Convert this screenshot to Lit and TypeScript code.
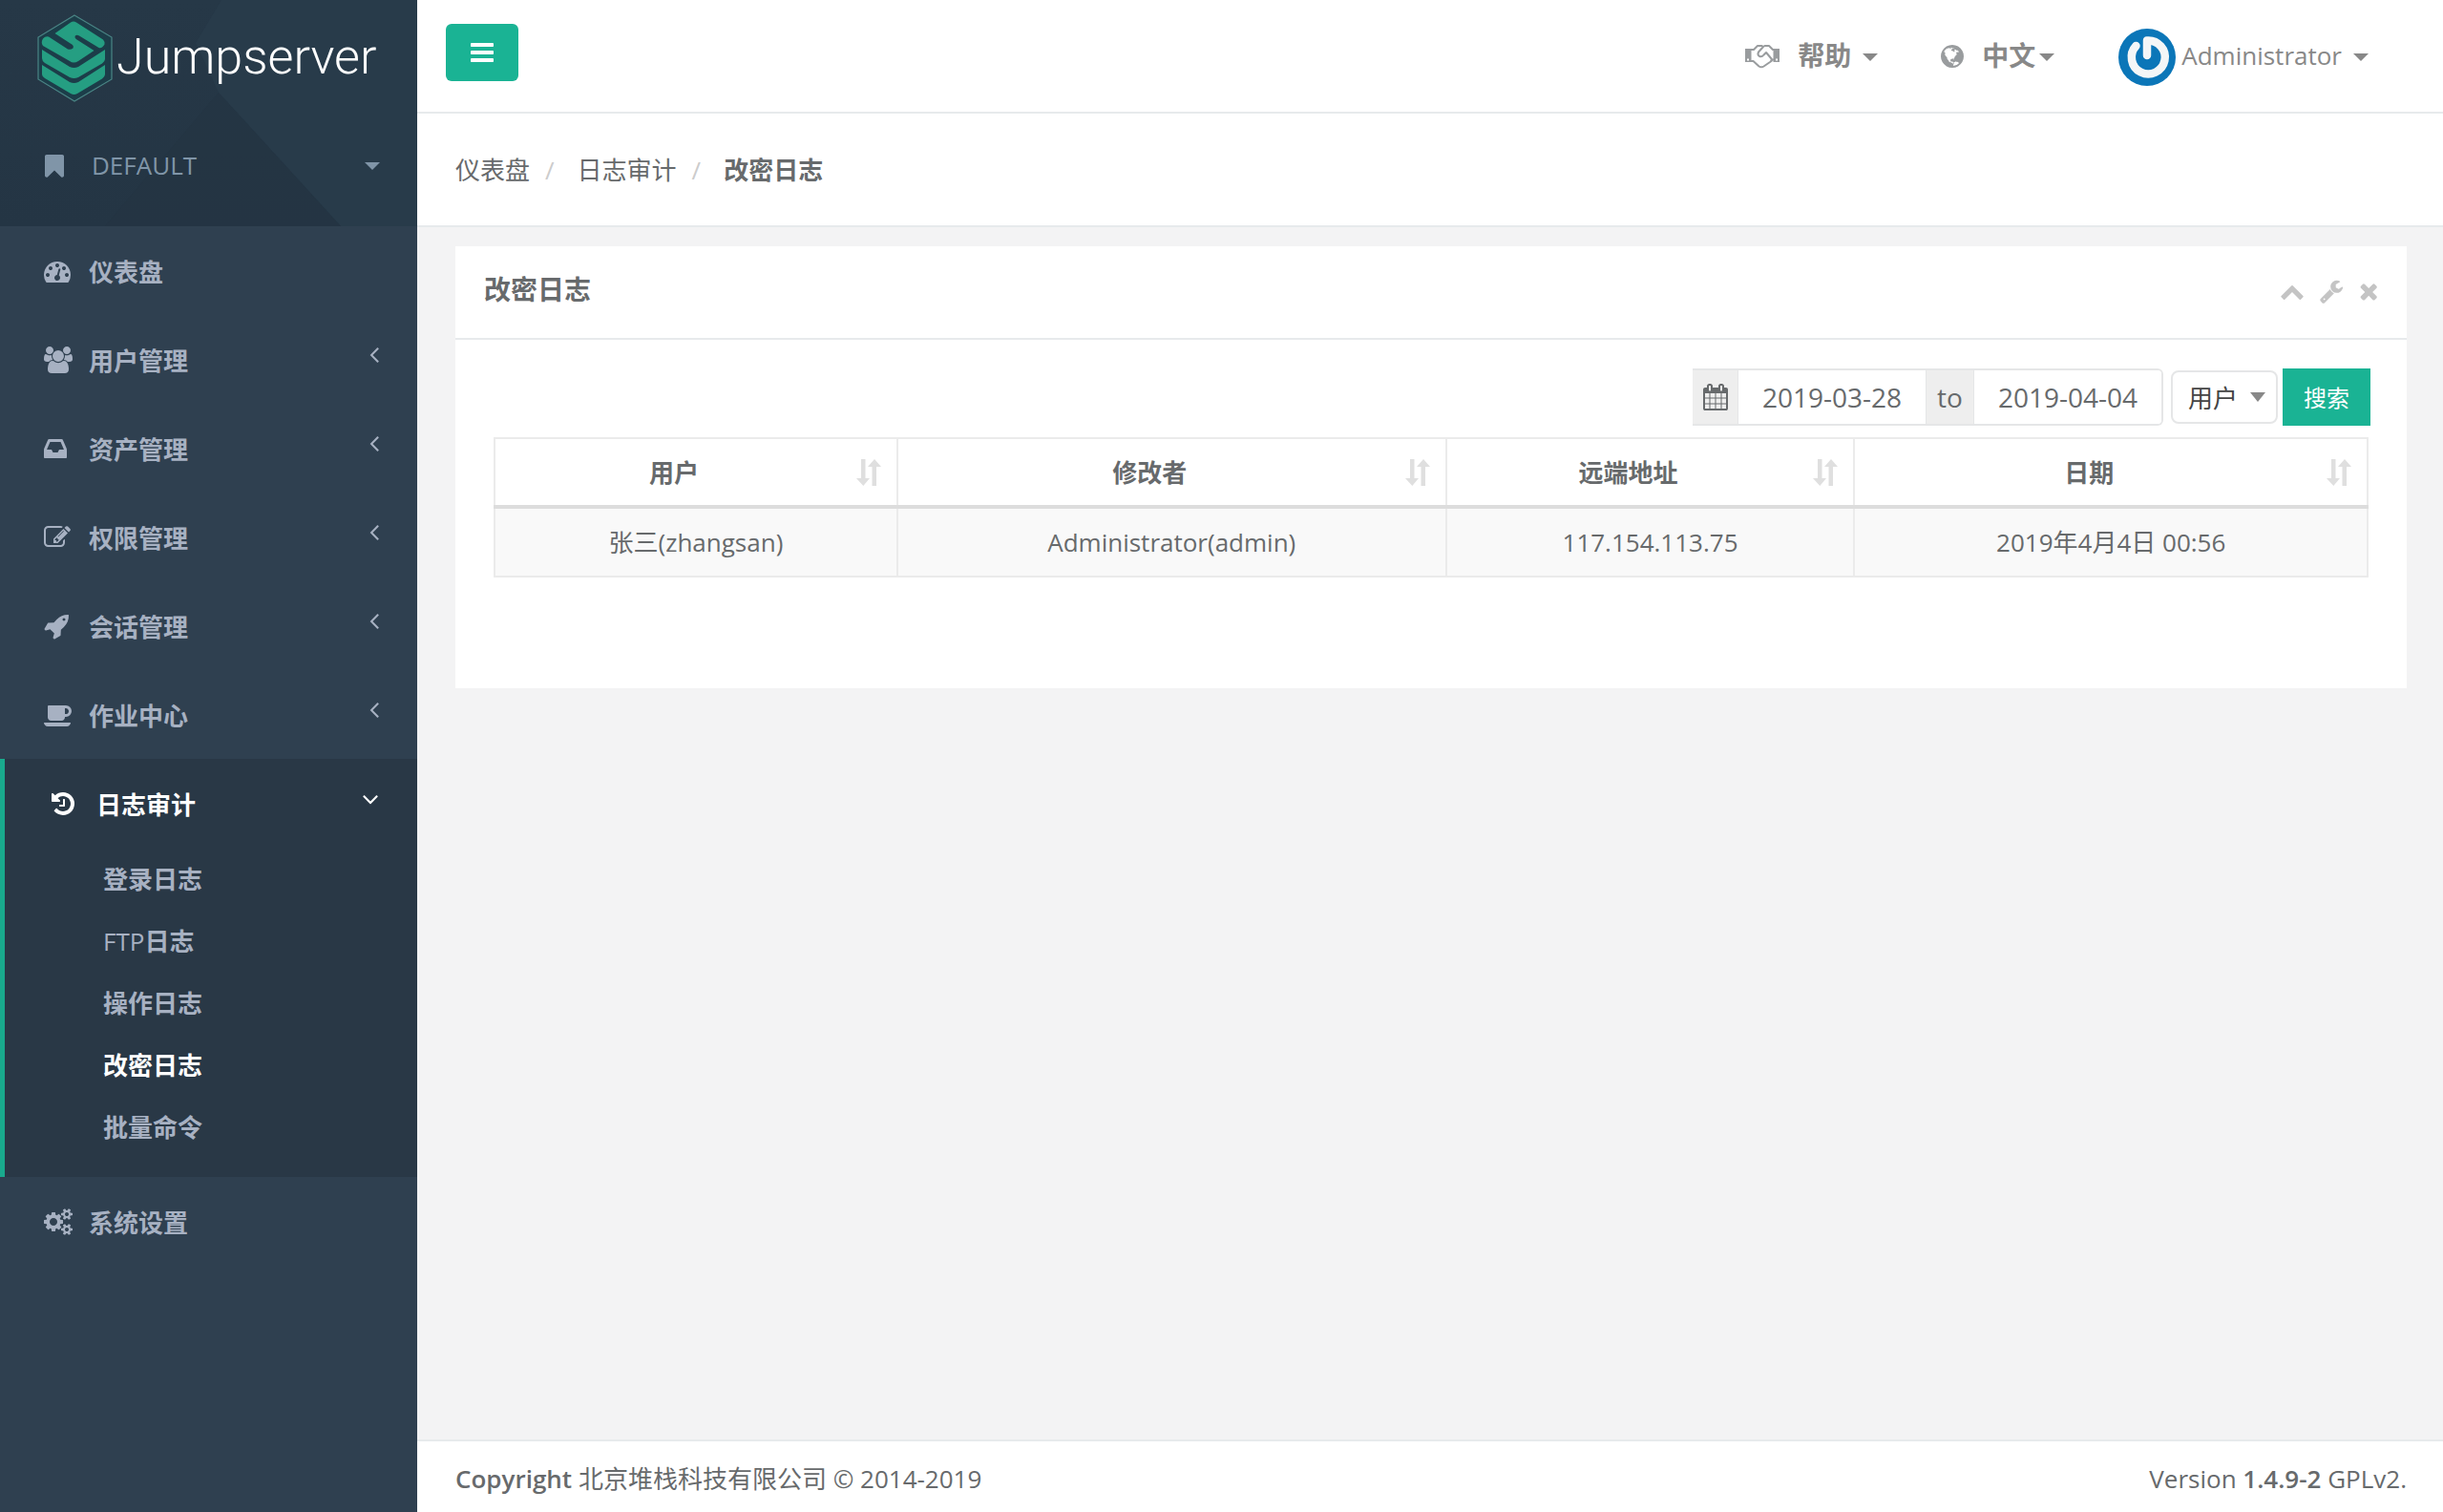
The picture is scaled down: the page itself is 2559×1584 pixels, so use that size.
import { LitElement, html, css, svg } from "lit";
import { customElement } from "lit/decorators.js";

type Glyph = { w: number; d: string };

const icons: Record<string, Glyph> = {
  bars: { w: 1536, d: "M1536 1344v128q0 26-19 45t-45 19H64q-26 0-45-19t-19-45v-128q0-26 19-45t45-19h1408q26 0 45 19t19 45zm0-512v128q0 26-19 45t-45 19H64q-26 0-45-19T0 960V832q0-26 19-45t45-19h1408q26 0 45 19t19 45zm0-512v128q0 26-19 45t-45 19H64q-26 0-45-19T0 448V320q0-26 19-45t45-19h1408q26 0 45 19t19 45z" },
  bookmark: { w: 1280, d: "M1164 128q23 0 44 9 33 13 52.500 41t19.500 62v1289q0 34-19.500 62t-52.500 41q-19 8-44 8-48 0-83-32L640 1184l-441 424q-36 33-83 33-23 0-44-9-33-13-52.500-41T0 1529V240q0-34 19.500-62T72 137q21-9 44-9h1048z" },
  dashboard: { w: 1792, d: "M384 1152q0-53-37.500-90.500T256 1024t-90.500 37.500T128 1152t37.500 90.500T256 1280t90.500-37.500T384 1152zm192-448q0-53-37.500-90.500T448 576t-90.500 37.500T320 704t37.500 90.500T448 832t90.500-37.500T576 704zm428 481l101-382q6-26-7.500-48.500T1059 725t-48 6.500-30 39.500l-101 382q-60 5-107 43.500t-63 98.500q-20 77 20 146t117 89 146-20 89-117q16-60-6-117t-72-91zm660-33q0-53-37.500-90.500T1536 1024t-90.500 37.500-37.500 90.500 37.500 90.500 90.500 37.500 90.500-37.500 37.500-90.500zm-640-640q0-53-37.500-90.500T896 384t-90.500 37.500T768 512t37.500 90.500T896 640t90.500-37.500T1024 512zm448 192q0-53-37.500-90.500T1344 576t-90.500 37.500T1216 704t37.500 90.500T1344 832t90.500-37.500T1472 704zm320 448q0 261-141 483-19 29-54 29H195q-35 0-54-29Q0 1414 0 1152q0-182 71-348t191-286 286-191 348-71 348 71 286 191 191 286 71 348z" },
  users: { w: 1920, d: "M593 896q-162 5-265 128H194q-82 0-138-40.500T0 865q0-353 124-353 6 0 43.500 21t97.500 42.500T384 597q67 0 133-23-5 37-5 66 0 139 81 256zm1071 637q0 120-73 189.500t-194 69.500H523q-121 0-194-69.500T256 1533q0-53 3.500-103.500t14-109T300 1212t43-97.500 62-81 85.500-53.500T602 960q10 0 43 21.500t73 48 107 48 135 21.500 135-21.500 107-48 73-48 43-21.500q61 0 111.500 20t85.500 53.500 62 81 43 97.500 26.500 108.500 14 109 3.500 103.500zM640 256q0 106-75 181t-181 75-181-75-75-181 75-181T384 0t181 75 75 181zm704 384q0 159-112.500 271.500T960 1024 688.500 911.500 576 640t112.500-271.500T960 256t271.500 112.500T1344 640zm576 225q0 78-56 118.500t-138 40.500h-134q-103-123-265-128 81-117 81-256 0-29-5-66 66 23 133 23 59 0 119-21.500t97.500-42.500 43.500-21q124 0 124 353zm-128-609q0 106-75 181t-181 75-181-75-75-181 75-181 181-75 181 75 75 181z" },
  inbox: { w: 1536, d: "M1023 960h316q-1-3-2.500-8t-2.500-8l-212-496H414L202 944q-1 2-2.500 8t-2.500 8h316l95 192h320zm513 30v482q0 26-19 45t-45 19H64q-26 0-45-19t-19-45V990q0-62 25-123l238-552q10-25 36.500-42t52.500-17h832q26 0 52.500 17t36.500 42l238 552q25 61 25 123z" },
  edit: { w: 1792, d: "M888 1184l116-116-152-152-116 116v56h96v96h56zm440-720q-16-16-33 1L945 815q-17 17-1 33t33-1l350-350q17-17 1-33zm80 594v190q0 119-84.500 203.500T1120 1536H288q-119 0-203.500-84.500T0 1248V416q0-119 84.500-203.500T288 128h832q63 0 117 25 15 7 18 23 3 17-9 29l-49 49q-14 14-32 8-23-6-45-6H288q-66 0-113 47t-47 113v832q0 66 47 113t113 47h832q66 0 113-47t47-113v-126q0-13 9-22l64-64q15-15 35-7t20 29zm-96-738l288 288-672 672H640V992zm444 132l-92 92-288-288 92-92q28-28 68-28t68 28l152 152q28 28 28 68t-28 68z" },
  rocket: { w: 1664, d: "M1440 448q0-40-28-68t-68-28-68 28-28 68 28 68 68 28 68-28 28-68zm224-288q0 249-75.500 430.500T1335 955q-81 80-195 176l-20 379q-2 16-16 26l-384 224q-7 4-16 4-12 0-23-9l-64-64q-13-14-8-32l85-276-281-281-276 85q-3 1-9 1-14 0-23-9l-64-64q-17-19-5-39l224-384q10-14 26-16l379-20q96-114 176-195 188-187 358-258t431-71q14 0 24 9.500t10 22.500z" },
  coffee: { w: 1920, d: "M1664 640q0-80-56-136t-136-56h-64v384h64q80 0 136-56t56-136zM0 1408h1792q0 106-75 181t-181 75H256q-106 0-181-75T0 1408zm1856-768q0 159-112.500 271.500T1472 1024h-64v32q0 92-66 158t-158 66H480q-92 0-158-66t-66-158V320q0-26 19-45t45-19h1152q159 0 271.500 112.500T1856 640z" },
  history: { w: 1536, d: "M1536 896q0 156-61 298t-164 245-245 164-298 61q-172 0-327-72.500T177 1387q-7-10-6.500-22.500t8.500-20.500l137-138q10-9 25-9 16 2 23 12 73 95 179 147t225 52q104 0 198.500-40.500T1130 1258t109.500-163.500T1280 896t-40.500-198.500T1130 534 966.500 424.500 768 384q-98 0-188 35.500T420 521l137 138q31 30 14 69-17 40-59 40H64q-26 0-45-19T0 704V256q0-42 40-59 39-17 69 14l130 129q107-101 244.500-156.500T768 128q156 0 298 61t245 164 164 245 61 298zM896 608v448q0 14-9 23t-23 9H544q-14 0-23-9t-9-23v-64q0-14 9-23t23-9h224V608q0-14 9-23t23-9h64q14 0 23 9t9 23z" },
  cogs: { w: 1920, d: "M896 896q0-106-75-181t-181-75-181 75-75 181 75 181 181 75 181-75 75-181zm768 512q0-52-38-90t-90-38-90 38-38 90q0 53 37.500 90.500t90.500 37.500 90.500-37.500 37.500-90.500zm0-1024q0-52-38-90t-90-38-90 38-38 90q0 53 37.500 90.500T1536 512t90.500-37.500T1664 384zm-384 421v185q0 10-7 19.500t-16 10.500l-155 24q-11 35-32 76 34 48 90 115 7 11 7 20 0 12-7 19-23 30-82.500 89.500T999 1423q-11 0-21-7l-115-90q-37 19-77 31-11 108-23 155-7 24-30 24H547q-11 0-20-7.500t-10-17.500l-23-153q-34-10-75-31l-118 89q-7 7-20 7-11 0-21-8-144-133-144-160 0-9 7-19 10-14 41-53t47-61q-23-44-35-82l-152-24q-10-1-17-9.500T0 987V802q0-10 7-19.500T23 772l155-24q11-35 32-76-34-48-90-115-7-11-7-20 0-12 7-20 22-30 82-89t79-59q11 0 21 7l115 90q34-18 77-32 11-108 23-154 7-24 30-24h186q11 0 20 7.500t10 17.500l23 153q34 10 75 31l118-89q8-7 20-7 11 0 21 8 144 133 144 160 0 8-7 19-12 16-42 54t-45 60q23 48 34 82l152 23q10 2 17 10.500t7 19.500zm640 533v140q0 16-149 31-12 27-30 52 51 113 51 138 0 4-4 7-122 71-124 71-8 0-46-47t-52-68q-20 2-30 2t-30-2q-14 21-52 68t-46 47q-2 0-124-71-4-3-4-7 0-25 51-138-18-25-30-52-149-15-149-31v-140q0-16 149-31 13-29 30-52-51-113-51-138 0-4 4-7 4-2 35-20t59-34 30-16q8 0 46 46.500t52 67.500q20-2 30-2t30 2q51-71 92-112l6-2q4 0 124 70 4 3 4 7 0 25-51 138 17 23 30 52 149 15 149 31zm0-1024v140q0 16-149 31-12 27-30 52 51 113 51 138 0 4-4 7-122 71-124 71-8 0-46-47t-52-68q-20 2-30 2t-30-2q-14 21-52 68t-46 47q-2 0-124-71-4-3-4-7 0-25 51-138-18-25-30-52-149-15-149-31V314q0-16 149-31 13-29 30-52-51-113-51-138 0-4 4-7 4-2 35-20t59-34 30-16q8 0 46 46.500t52 67.500q20-2 30-2t30 2q51-71 92-112l6-2q4 0 124 70 4 3 4 7 0 25-51 138 17 23 30 52 149 15 149 31z" },
  globe: { w: 1536, d: "M768 128q209 0 385.500 103T1433 510.500 1536 896t-103 385.500-279.500 279.500T768 1664t-385.500-103T103 1281.500 0 896t103-385.500T382.500 231 768 128zm274 521q-2 1-9.500 9.500T1019 668q2 0 4.500-5t5-11 3.500-7q6-7 22-15 14-6 52-12 34-8 51 11-2-2 9.500-13t14.500-12q3-2 15-4.500t15-7.500l2-22q-12 1-17.500-7t-6.500-21q0 2-6 8 0-7-4.500-8t-11.500 1-9 1q-10-3-15-7.500t-8-16.500-4-15q-2-5-9.500-10.500T1113 494q-1-2-2.500-5.500t-3-6.500-4-5.500-5.500-2.500-7 5-7.500 10-4.500 5q-3-2-6-1.500t-4.500 1-4.500 3-5 3.500q-3 2-8.500 3t-8.500 2q15-5-1-11-10-4-16-3 9-4 7.500-12t-8.500-14h5q-1-4-8.500-8.500t-17.500-8.500-13-6q-8-5-34-9.500t-33-.5q-5 6-4.500 10.500t4 14 3.500 12.500q1 6-5.500 13t-6.500 12q0 7 14 15.500t10 21.500q-3 8-16 16t-16 12q-5 8-1.500 18.500T911 596q2 2 1.500 4t-3.500 4.500-5.500 4-6.500 3.500l-3 2q-11 5-20.500-6t-13.500-26q-7-25-16-30-23-8-29 1-5-13-41-26-25-9-58-4 6-1 0-15-7-15-19-12 3-6 4-17.500t1-13.500q3-13 12-23 1-1 7-8.500t9.500-13.500.5-6q35 4 50-11 5-5 11.500-17t10.500-17q9-6 14-5.500t14.500 5.500 14.500 5q14 1 15.500-11t-7.500-20q12 1 3-17-4-7-8-9-12-4-27 5-8 4 2 8-1-1-9.500 10.500T804 373t-16-5q-1-1-5.500-13.500T773 341q-8 0-16 15 3-8-11-15t-24-8q19-12-8-27-7-4-20.500-5t-19.500 4q-5 7-5.500 11.500t5 8 10.500 5.500 11.500 4 8.500 3q14 10 8 14-2 1-8.500 3.500T682 355t-6 4q-3 4 0 14t-2 14q-5-5-9-17.500t-7-16.500q7 9-25 6l-10-1q-4 0-16 2t-20.500 1-13.500-8q-4-8 0-20 1-4 4-2-4-3-11-9.500t-10-8.500q-46 15-94 41 6 1 12-1 5-2 13-6.500t10-5.500q34-14 42-7l5-5q14 16 20 25-7-4-30-1-20 6-22 12 7 12 5 18-4-3-11.500-10T481 363t-15-5q-16 0-22 1-146 80-235 222 7 7 12 8 4 1 5 9t2.500 11 11.500-3q9 8 3 19 1-1 44 27 19 17 21 21 3 11-10 18-1-2-9-9t-9-4q-3 5 .5 18.500T291 709q-7 0-9.500 16t-2.500 35.500-1 23.500l2 1q-3 12 5.500 34.500T307 838q-13 3 20 43 6 8 8 9 3 2 12 7.500t15 10 10 10.500q4 5 10 22.500t14 23.500q-2 6 9.500 20t10.500 23q-1 0-2.500 1t-2.500 1q3 7 15.500 14t15.500 13q1 3 2 10t3 11 8 2q2-20-24-62-15-25-17-29-3-5-5.500-15.500T404 1039q2 0 6 1.500t8.500 3.500 7.500 4 2 3q-3 7 2 17.500t12 18.500 17 19 12 13q6 6 14 19.500t0 13.500q9 0 20 10.500t17 19.500q5 8 8 26t5 24q2 7 8.500 13.500t12.500 9.500l16 8 13 7q5 2 18.500 10.500t21.500 11.500q10 4 16 4t14.500-2.500 13.500-3.500q15-2 29 15t21 21q36 19 55 11-2 1 .5 7.500t8 15.500 9 14.500 5.500 8.500q5 6 18 15t18 15q6-4 7-9-3 8 7 20t18 10q14-3 14-32-31 15-49-18 0-1-2.500-5.500t-4-8.500-2.500-8.500 0-7.500 5-3q9 0 10-3.500t-2-12.500-4-13q-1-8-11-20t-12-15q-5 9-16 8t-16-9q0 1-1.500 5.500T784 1301q-13 0-15-1 1-3 2.500-17.500T775 1260q1-4 5.500-12t7.500-14.500 4-12.500-4.500-9.500T770 1209q-19 1-26 20-1 3-3 10.500t-5 11.500-9 7q-7 3-24 2t-24-5q-13-8-22.500-29t-9.500-37q0-10 2.500-26.500t3-25-5.500-24.500q3-2 9-9.500t10-10.500q2-1 4.500-1.500t4.500 0 4-1.500 3-6q-1-1-4-3-3-3-4-3 7 3 28.500-1.500t27.500 1.500q15 11 22-2 0-1-2.500-9.500T749 1034q5 27 29 9 3 3 15.500 5t17.500 5q3 2 7 5.500t5.500 4.500 5-.5 8.500-6.500q10 14 12 24 11 40 19 44 7 3 11 2t4.500-9.500 0-14-1.500-12.500l-1-8v-18l-1-8q-15-3-18.500-12t1.500-18.500 15-18.500q1-1 8-3.500t15.500-6.500 12.500-8q21-19 15-35 7 0 11-9-1 0-5-3t-7.500-5-4.500-2q9-5 2-16 5-3 7.500-11t7.500-10q9 12 21 2 7-8 1-16 5-7 20.500-10.500T990 844q7 2 8-2t1-12 3-12q4-5 15-9t13-5l17-11q3-4 0-4 18 2 31-11 10-11-6-20 3-6-3-9.500t-15-5.500q3-1 11.500-.5t10.500-1.500q15-10-7-16-17-5-43 12zm-163 877q206-36 351-189-3-3-12.500-4.500T1206 1329q-18-7-24-8 1-7-2.500-13t-8-9-12.500-8-11-7q-2-2-7-6t-7-5.500-7.500-4.500-8.500-2-10 1l-3 1q-3 1-5.500 2.500t-5.500 3-4 3 0 2.500q-21-17-36-22-5-1-11-5.500t-10.500-7-10-1.500-11.500 7q-5 5-6 15t-2 13q-7-5 0-17.500t2-18.500q-3-6-10.500-4.500t-12 4.500-11.500 8.500-9 6.500-8.500 5.500-8.500 7.500q-3 4-6 12t-5 11q-2-4-11.500-6.500T864 1284q2 10 4 35t5 38q7 31-12 48-27 25-29 40-4 22 12 26 0 7-8 20.500t-7 21.500q0 6 2 16z" },
  chevronUp: { w: 1792, d: "M1683 1331l-166 165q-19 19-45 19t-45-19L896 965l-531 531q-19 19-45 19t-45-19l-166-165q-19-19-19-45.500t19-45.500l742-741q19-19 45-19t45 19l742 741q19 19 19 45.500t-19 45.500z" },
  wrench: { w: 1664, d: "M384 1472q0-26-19-45t-45-19-45 19-19 45 19 45 45 19 45-19 19-45zm644-420l-682 682q-37 37-90 37-52 0-91-37L59 1626q-38-36-38-90 0-53 38-91l681-681q39 98 114.500 173.500T1028 1052zm634-435q0 39-23 106-47 134-164.500 217.500T1216 1024q-185 0-316.500-131.500T768 576t131.500-316.500T1216 128q58 0 121.500 16.500T1445 191q16 11 16 28t-16 28l-293 169v224l193 107q5-3 79-48.500t135.500-81T1630 582q15 0 23.500 10t8.500 25z" },
  times: { w: 1408, d: "M1298 1322q0 40-28 68l-136 136q-28 28-68 28t-68-28l-294-294-294 294q-28 28-68 28t-68-28l-136-136q-28-28-28-68t28-68l294-294-294-294q-28-28-28-68t28-68l136-136q28-28 68-28t68 28l294 294 294-294q28-28 68-28t68 28l136 136q28 28 28 68t-28 68L976 960l294 294q28 28 28 68z" },
  calendar: { w: 1664, d: "M128 1664h288v-288H128v288zm352 0h320v-288H480v288zm-352-352h288V992H128v320zm352 0h320V992H480v320zM128 928h288V640H128v288zm736 736h320v-288H864v288zM480 928h320V640H480v288zm768 736h288v-288h-288v288zm-384-352h320V992H864v320zM512 448V160q0-13-9.500-22.500T480 128h-64q-13 0-22.500 9.500T384 160v288q0 13 9.500 22.500T416 480h64q13 0 22.500-9.500T512 448zm736 864h288V992h-288v320zM864 928h320V640H864v288zm384 0h288V640h-288v288zm32-480V160q0-13-9.500-22.500T1248 128h-64q-13 0-22.500 9.500T1152 160v288q0 13 9.500 22.500t22.500 9.500h64q13 0 22.500-9.500t9.500-22.500zm384-64v1280q0 52-38 90t-90 38H128q-52 0-90-38t-38-90V384q0-52 38-90t90-38h128v-96q0-66 47-113T416 0h64q66 0 113 47t47 113v96h384v-96q0-66 47-113t113-47h64q66 0 113 47t47 113v96h128q52 0 90 38t38 90z" },
  angleLeft: { w: 640, d: "M627 544q0 13-10 23L224 960l393 393q10 10 10 23t-10 23l-50 50q-10 10-23 10t-23-10L55 983q-10-10-10-23t10-23l466-466q10-10 23-10t23 10l50 50q10 10 10 23z" },
  angleDown: { w: 1152, d: "M1075 800q0 13-10 23l-466 466q-10 10-23 10t-23-10L87 823q-10-10-10-23t10-23l50-50q10-10 23-10t23 10l393 393 393-393q10-10 23-10t23 10l50 50q10 10 10 23z" },
};

/* Font glyphs share a 1792-unit em; height is one em, width follows the glyph. */
const icon = (name: string) => {
  const g = icons[name];
  return html`<svg class="icon" viewBox="0 0 ${g.w} 1792" aria-hidden="true"><path d=${g.d}></path></svg>`;
};

const handshake = html`<svg class="icon" viewBox="0 0 36 28" aria-hidden="true">
  <path fill-rule="evenodd" d="M0 6h6.500v14H0zM2 16.500v2h2v-2z M29.500 6H36v14h-6.500zM32 16.500v2h2v-2z"></path>
  <path fill="none" stroke="currentColor" stroke-width="2" stroke-linejoin="round" stroke-linecap="round"
    d="M6 7h3l4-4h4.500l1.500 1 1.500-1H25l4 4h1.500 M6 19h2.500l6 5.500q2.500 1.500 5 0l8-5.500 1-1.500h2 M19 4l-5 5.500q-1.500 3 1 4.500 2.500 1 4.500-1.500L22 10l5.500 6.500q.5 2-1 3"></path>
</svg>`;

const sortIcon = html`<svg class="sort" viewBox="0 0 26 28" aria-hidden="true">
  <path d="M5 0h4.500v20H14l-6.700 8L0 20h5zM16.500 28h4.500V8h5L19 0l-7 8h4.500z"></path>
</svg>`;

const logoMark = svg`
  <path d="M39 1L78 24v44L39 91 1 68V24z" fill="#1c3d49" stroke="#4a8585" stroke-width="1.200"></path>
  <g fill="#259e82">
    <path d="M35 8.500Q38 6.500 41 8.500L69 26.500q2 2 1.500 5-2.500 4.500-6 3.500L44 22.500q-3-1.500-4.500.5-.5 2 2 3.500L59.500 38 43 49q-5 3-9 0L6 33q-2.500-3.500 0-7.500 2.500-3 6-2L32 36.500q3 1 5.500-1 1-2-.5-3.500L18.500 20z"></path>
    <path d="M5 37l29 18q4.500 2 9 0l28-18v10q0 2-3 4.500L43 66q-4.500 2-9 0L8 51q-3-2-3-5z"></path>
    <path d="M5 53l29 18q4.500 2 9 0l28-18v10q0 2-3 4.500L42 83q-3.500 2-7 0L8 67q-3-2-3-4z"></path>
  </g>`;

const menu = [
  { icon: "users", label: "用户管理" },
  { icon: "inbox", label: "资产管理" },
  { icon: "edit", label: "权限管理" },
  { icon: "rocket", label: "会话管理" },
  { icon: "coffee", label: "作业中心" },
];
const auditItems = [
  { latin: "", text: "登录日志" },
  { latin: "FTP", text: "日志" },
  { latin: "", text: "操作日志" },
  { latin: "", text: "改密日志", current: true },
  { latin: "", text: "批量命令" },
];
const columns = ["用户", "修改者", "远端地址", "日期"];
const rows = [["张三(zhangsan)", "Administrator(admin)", "117.154.113.75", "2019年4月4日 00:56"]];

@customElement("app-root")
export class AppRoot extends LitElement {
  static styles = css`
    :host {
      display: grid;
      grid-template-columns: 437px minmax(0, 1fr);
      min-height: 100vh;
      background: #f3f3f4;
      color: #676a6c;
      font: 26px/37px "Open Sans", "Noto Sans CJK SC", sans-serif;
    }
    * { box-sizing: border-box; }
    a { color: inherit; text-decoration: none; }
    ul, ol { list-style: none; margin: 0; padding: 0; }
    button, input, select { font: inherit; color: inherit; margin: 0; }
    .icon { height: 28px; fill: currentColor; display: block; flex: none; }
    .caret {
      border: 8px solid transparent;
      border-top-color: currentColor;
      border-bottom: 0;
      flex: none;
    }

    .side { background: #2f4050; color: #a7b1c2; font-weight: 700; }
    .brand {
      position: relative;
      height: 237px;
      padding: 15px 39px 0 39px;
      display: flex;
      flex-direction: column;
      background: linear-gradient(#263847, #243544);
    }
    .facets { position: absolute; inset: 0; width: 100%; height: 100%; }
    .logo, .org { position: relative; }
    .logo { display: flex; align-items: center; gap: 4px; color: #fff; height: 92px; }
    .mark { width: 79px; height: 92px; flex: none; }
    .word { font: 300 52px/60px Roboto, sans-serif; padding-bottom: 2px; }
    .org {
      display: flex;
      align-items: center;
      margin: 48px 0 0 8px;
      font-weight: 400;
      color: #8095a8;
    }
    .org .icon { width: 20px; }
    .org span:nth-of-type(1) { margin-left: 29px; flex: 1; }
    .item { display: flex; align-items: center; height: 93px; padding: 0 40px 0 46px; }
    .item .ico { width: 28px; margin-right: 19px; }
    .item .label { flex: 1; padding-top: 3px; }
    .item .arrow { padding-bottom: 12px; }
    .active { background: #293846; border-left: 5px solid #19aa8d; padding-bottom: 20px; }
    .active .item { color: #fff; padding-left: 49px; }
    .sub a { display: block; padding: 15px 0 13px 103px; }
    .sub .current { color: #fff; }
    .latin { font-weight: 400; }

    .main { display: flex; flex-direction: column; min-width: 0; }
    .top {
      height: 119px;
      background: #fff;
      border-bottom: 2px solid #e7eaec;
      display: flex;
      align-items: center;
      padding: 0 78px 0 30px;
    }
    .toggle {
      width: 76px;
      height: 60px;
      border: 0;
      border-radius: 6px;
      background: #1ab394;
      color: #fff;
      display: grid;
      place-items: center;
      margin: 0 auto 8px 0;
    }
    .nav { display: flex; align-items: center; color: #888; }
    .nav a { display: flex; align-items: center; }
    .nav .caret { margin-top: 2px; }
    .strong { font-weight: 700; font-size: 28px; }
    .help { margin-right: 66px; }
    .help .icon { margin-right: 19px; color: #999c9e; }
    .help .caret { margin-left: 12px; }
    .lang { margin-right: 67px; }
    .lang .icon { margin-right: 19px; color: #999c9e; }
    .lang .caret { margin-left: 4px; }
    .avatar { width: 60px; height: 60px; margin: 2px 6px 0 0; }
    .user .caret { margin-left: 12px; }
    .crumbs {
      height: 119px;
      background: #fff;
      border-bottom: 2px solid #e7eaec;
      display: flex;
      align-items: center;
      padding: 2px 40px 0;
    }
    .crumbs li + li::before { content: "/"; color: #ccc; font-weight: 400; padding: 0 24px 0 16px; }
    .crumbs b { font-weight: 700; }

    .panel { margin: 20px 38px 0 40px; background: #fff; }
    .panel-head {
      height: 98px;
      border-bottom: 2px solid #e7eaec;
      padding: 0 30px;
      display: flex;
      align-items: center;
      justify-content: space-between;
    }
    h5 { font-size: 28px; line-height: 37px; font-weight: 700; margin: 0; padding-bottom: 5px; }
    .tools { display: flex; gap: 16px; color: #c4c4c4; padding-bottom: 2px; }
    .tools button { border: 0; background: none; padding: 0; }
    .tools .icon { height: 26px; }
    .panel-body { padding: 30px 40px 116px; }
    .filter { display: flex; justify-content: flex-end; align-items: center; margin-right: -2px; }
    .range {
      display: flex;
      height: 60px;
      border: 2px solid #e5e6e7;
      border-left: 0;
      border-radius: 0 6px 6px 0;
      overflow: hidden;
      margin-right: 8px;
      font-size: 28px;
    }
    .addon { background: #eee; display: grid; place-items: center; width: 48px; border-right: 1px solid #e5e6e7; }
    .addon.mid { width: 51px; border-left: 1px solid #e5e6e7; }
    .range input { width: 196px; border: 0; padding: 0; text-align: center; background: #fff; }
    .pick {
      appearance: none;
      width: 112px;
      height: 56px;
      border: 2px solid #e5e6e7;
      border-radius: 8px;
      background: #fff;
      color: #444;
      padding: 2px 0 0 16px;
    }
    .pick-wrap { display: grid; align-items: center; margin-right: 5px; }
    .pick-wrap > * { grid-area: 1 / 1; }
    .pick-wrap .caret { justify-self: end; margin-right: 13px; color: #888; border-top-width: 10px; pointer-events: none; }
    .search { width: 92px; height: 60px; border: 0; padding: 0; background: #1ab394; color: #fff; font-size: 24px; }

    table { width: 100%; border-collapse: collapse; table-layout: fixed; margin-top: 12px; }
    th, td { border: 2px solid #ebebeb; text-align: center; padding: 0 16px; height: 73px; }
    th { border-bottom: 4px solid #dddddd; font-weight: 700; height: 72px; }
    td { background: #f9f9f9; }
    .c0 { width: 21.5%; }
    .c1 { width: 29.3%; }
    .c2 { width: 21.8%; }
    .th { display: flex; align-items: center; gap: 20px; }
    .th span { flex: 1; padding-top: 2px; }
    .sort { width: 26px; height: 28px; fill: #dfdfdf; }

    .foot {
      margin-top: auto;
      height: 76px;
      background: #fff;
      border-top: 2px solid #e7eaec;
      padding: 4px 38px 0 40px;
      display: flex;
      align-items: center;
      justify-content: space-between;
    }
    .foot strong { font-weight: 600; }
  `;

  render() {
    return html`
      <nav class="side">
        <div class="brand">
          <svg class="facets" viewBox="0 0 437 237" preserveAspectRatio="none" aria-hidden="true">
            <path d="M232 0L205 45l24 52L357 237h80V0z" fill="#283b4a"></path>
            <path d="M229 97L357 237H110z" fill="#243342" opacity=".5"></path>
          </svg>
          <a class="logo" href="#"><svg class="mark" viewBox="0 0 79 92" aria-hidden="true">${logoMark}</svg><span class="word">Jumpserver</span></a>
          <a class="org" href="#">${icon("bookmark")}<span>DEFAULT</span><span class="caret"></span></a>
        </div>
        <ul>
          <li><a class="item" href="#"><span class="ico">${icon("dashboard")}</span><span class="label">仪表盘</span></a></li>
          ${menu.map((m) => html`<li><a class="item" href="#"><span class="ico">${icon(m.icon)}</span><span class="label">${m.label}</span><span class="arrow">${icon("angleLeft")}</span></a></li>`)}
          <li class="active">
            <a class="item" href="#"><span class="ico">${icon("history")}</span><span class="label">日志审计</span><span class="arrow">${icon("angleDown")}</span></a>
            <ul class="sub">${auditItems.map((t) => html`<li><a class=${t.current ? "current" : ""} href="#">${t.latin ? html`<span class="latin">${t.latin}</span>` : ""}${t.text}</a></li>`)}</ul>
          </li>
          <li><a class="item" href="#"><span class="ico">${icon("cogs")}</span><span class="label">系统设置</span></a></li>
        </ul>
      </nav>
      <div class="main">
        <header class="top">
          <button class="toggle" aria-label="Menu">${icon("bars")}</button>
          <div class="nav">
            <a class="help" href="#">${handshake}<span class="strong">帮助</span><span class="caret"></span></a>
            <a class="lang" href="#">${icon("globe")}<span class="strong">中文</span><span class="caret"></span></a>
            <a class="user" href="#">
              <svg class="avatar" viewBox="0 0 60 60" aria-hidden="true">
                <circle cx="30" cy="30" r="30" fill="#0b76b8"></circle>
                <path d="M18.500 18A17.500 17.500 0 1 0 30 12.500v15.500" fill="none" stroke="#f4f6f7" stroke-width="8.500" stroke-linecap="round" stroke-linejoin="round"></path>
              </svg><span>Administrator</span><span class="caret"></span></a>
          </div>
        </header>
        <ol class="crumbs">
          <li><a href="#">仪表盘</a></li>
          <li><a href="#">日志审计</a></li>
          <li><b>改密日志</b></li>
        </ol>
        <section class="panel">
          <div class="panel-head">
            <h5>改密日志</h5>
            <div class="tools">
              <button aria-label="Collapse">${icon("chevronUp")}</button>
              <button aria-label="Settings">${icon("wrench")}</button>
              <button aria-label="Close">${icon("times")}</button>
            </div>
          </div>
          <div class="panel-body">
            <form class="filter">
              <div class="range">
                <span class="addon">${icon("calendar")}</span>
                <input type="text" aria-label="Start date" value="2019-03-28" />
                <span class="addon mid">to</span>
                <input type="text" aria-label="End date" value="2019-04-04" />
              </div>
              <div class="pick-wrap">
                <select class="pick" aria-label="用户"><option>用户</option></select>
                <span class="caret"></span>
              </div>
              <button class="search" type="button">搜索</button>
            </form>
            <table>
              <thead><tr>${columns.map((c, i) => html`<th class="c${i}"><div class="th"><span>${c}</span>${sortIcon}</div></th>`)}</tr></thead>
              <tbody>${rows.map((r) => html`<tr>${r.map((v) => html`<td>${v}</td>`)}</tr>`)}</tbody>
            </table>
          </div>
        </section>
        <footer class="foot">
          <div><strong>Copyright</strong> 北京堆栈科技有限公司 © 2014-2019</div>
          <div>Version <strong>1.4.9-2</strong> GPLv2.</div>
        </footer>
      </div>
    `;
  }
}
